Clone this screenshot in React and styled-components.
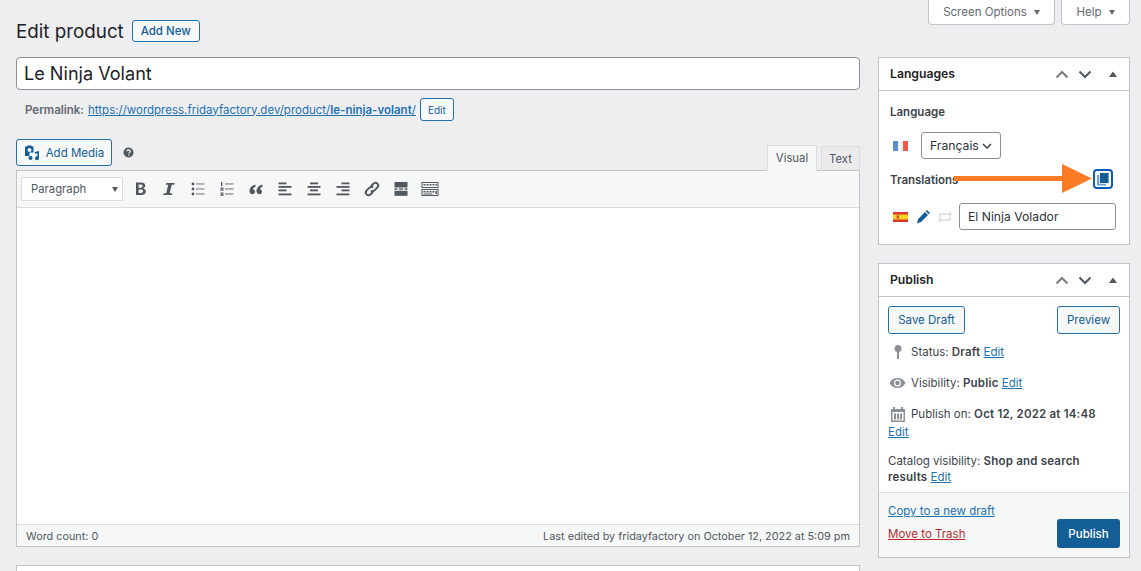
import React from "react";
import styled, { createGlobalStyle } from "styled-components";

const Global = createGlobalStyle`
  html, body { margin: 0; padding: 0; background: #eeeef0; height: 100%; overflow: hidden; }
  body { font-family: Inter, "Liberation Sans", sans-serif; font-size: 11.5px; color: #3c434a; }
  * { box-sizing: border-box; }
`;

const Page = styled.div`
  display: grid;
  grid-template-columns: 844px 252px;
  column-gap: 18px;
  padding-left: 16px;
  width: 1141px;
  height: 571px;
  overflow: hidden;
`;
const Left = styled.div`
  display: flex;
  flex-direction: column;
  padding-top: 20px;
`;
const Right = styled.div`
  display: flex;
  flex-direction: column;
`;
const HeadingRow = styled.div`
  display: flex;
  align-items: center;
  gap: 8px;
  height: 22px;
`;
const Title = styled.h1`
  margin: 0;
  padding-top: 1px;
  font-size: 18.8px;
  font-weight: 400;
  color: #1d2327;
  line-height: 22px;
`;
const OutlineButton = styled.a`
  display: inline-flex;
  align-items: center;
  justify-content: center;
  flex: none;
  border: 1px solid #2271b1;
  border-radius: 3px;
  background: #f6f7f7;
  color: #135e96;
  font-size: ${p => p.$size || 11.5}px;
  font-weight: ${p => p.$weight || 400};
  width: ${p => p.$w}px;
  height: ${p => p.$h}px;
  gap: ${p => p.$gap || 0}px;
  margin-left: ${p => p.$ml || 0}px;
`;
const TitleInput = styled.div`
  margin-top: 15px;
  height: 33px;
  background: #fff;
  border: 1px solid #8c8f94;
  border-radius: 4px;
  padding-left: 7px;
  font-size: 18.1px;
  line-height: 31.5px;
  color: #1d2327;
`;
const PermalinkRow = styled.div`
  display: flex;
  align-items: center;
  height: 23px;
  margin-top: 8px;
  padding-left: 9px;
  color: #646970;
  font-size: 11.5px;
`;
const PermaLabel = styled.b`
  font-weight: 600;
  margin-right: 4px;
`;
const Link = styled.a`
  color: ${p => p.$red ? "#b32d2e" : "#2271b1"};
  text-decoration: underline;
  font-weight: ${p => p.$bold ? 600 : 400};
`;
const EditorTop = styled.div`
  display: flex;
  align-items: flex-end;
  justify-content: space-between;
  margin-top: 18px;
  height: 32px;
  position: relative;
  z-index: 1;
`;
const MediaGroup = styled.div`
  display: flex;
  align-items: center;
  gap: 11px;
  height: 27px;
  align-self: flex-start;
`;
const HelpDot = styled.svg`
  display: block;
`;
const Tabs = styled.div`
  display: flex;
  align-items: flex-end;
  gap: 4px;
`;
const Tab = styled.div`
  display: flex;
  align-items: center;
  justify-content: center;
  width: ${p => p.$w}px;
  height: ${p => p.$active ? 26 : 25}px;
  border: 1px solid #dcdcde;
  border-bottom: ${p => p.$active ? "1px solid #f6f7f7" : "1px solid #c3c4c7"};
  background: ${p => p.$active ? "#f6f7f7" : "#ebebec"};
  color: #50575e;
  font-size: 11.3px;
`;
const Editor = styled.div`
  margin-top: -1px;
  height: 377px;
  display: flex;
  flex-direction: column;
  border: 1px solid #c3c4c7;
  background: #fff;
`;
const Toolbar = styled.div`
  display: flex;
  align-items: center;
  height: 37px;
  padding-left: 4px;
  background: #f6f7f7;
  border-bottom: 1px solid #dcdcde;
  flex: none;
`;
const FormatSelect = styled.div`
  display: flex;
  align-items: center;
  justify-content: space-between;
  width: 102px;
  height: 24px;
  padding: 0 4px 0 9px;
  background: #fff;
  border: 1px solid #dcdcde;
  color: #50575e;
  font-size: 11.3px;
  margin-right: 2px;
`;
const Caret = styled.i`
  width: 0;
  height: 0;
  border-left: 3.5px solid transparent;
  border-right: 3.5px solid transparent;
  border-top: 5px solid ${p => p.$color || "#50575e"};
`;
const ToolIcon = styled.span`
  width: 29px;
  height: 20px;
  display: flex;
  align-items: center;
  justify-content: center;
  color: #50575e;
`;
const EditBody = styled.div`
  flex: 1;
`;
const StatusBar = styled.div`
  display: flex;
  justify-content: space-between;
  align-items: center;
  height: 22px;
  flex: none;
  padding: 0 9px;
  background: #f6f7f7;
  border-top: 1px solid #dcdcde;
  font-size: 10.85px;
  color: #50575e;
`;
const NextBox = styled.div`
  margin-top: 18px;
  height: 30px;
  background: #fff;
  border: 1px solid #c3c4c7;
`;
const MetaTabs = styled.div`
  display: flex;
  justify-content: flex-end;
  gap: 6px;
  height: 25px;
  margin-bottom: 32px;
`;
const MetaTab = styled.div`
  display: flex;
  align-items: center;
  justify-content: center;
  gap: 7px;
  width: ${p => p.$w}px;
  height: 25px;
  background: #fff;
  border: 1px solid #c3c4c7;
  border-top: 0;
  border-radius: 0 0 4px 4px;
  color: #646970;
  font-size: 11.5px;
`;
const Box = styled.section`
  background: #fff;
  border: 1px solid #c3c4c7;
  margin-bottom: ${p => p.$mb || 0}px;
  position: relative;
`;
const BoxHead = styled.header`
  display: flex;
  align-items: center;
  height: 33px;
  padding: 0 9px 0 11px;
  border-bottom: 1px solid #c3c4c7;
`;
const BoxTitle = styled.h2`
  margin: 0;
  padding-bottom: 2px;
  flex: 1;
  font-size: 12.2px;
  font-weight: 600;
  color: #1d2327;
`;
const Handles = styled.div`
  display: flex;
  align-items: center;
  gap: 9px;
  svg { display: block; }
`;
const TriangleHandle = styled.svg`
  margin-left: 5px;
`;
const LangBody = styled.div`
  height: 153px;
  padding: 14px 11px 0 11px;
`;
const Label = styled.div`
  font-weight: 600;
  font-size: 11.5px;
  line-height: 15px;
  color: #3c434a;
`;
const LangRow = styled.div`
  display: flex;
  align-items: center;
  margin-top: ${p => p.$mt}px;
  padding-left: 3px;
  height: 27px;
`;
const SelectBox = styled.div`
  display: flex;
  align-items: center;
  justify-content: space-between;
  width: 80px;
  height: 27px;
  padding: 0 8px;
  margin-left: 13px;
  border: 1px solid #8c8f94;
  border-radius: 3px;
  color: #2c3338;
  font-size: 12.2px;
`;
const TransHead = styled.div`
  display: flex;
  align-items: center;
  justify-content: space-between;
  margin-top: 10px;
  height: 20px;
`;
const TransLabel = styled(Label)`
  padding-top: 2px;
`;
const CopyButton = styled.div`
  display: flex;
  align-items: center;
  justify-content: center;
  width: 20px;
  height: 20px;
  margin-right: 5px;
  border: 2px solid #0a5cb8;
  border-radius: 4px;
`;
const Arrow = styled.svg`
  position: absolute;
  left: 75px;
  top: 105px;
`;
const TransInput = styled.div`
  flex: 1;
  height: 27px;
  border: 1px solid #8c8f94;
  border-radius: 3px;
  padding-left: 8px;
  margin-right: 2px;
  line-height: 25px;
  font-size: 12.2px;
  color: #2c3338;
`;
const FlagBox = styled.svg`
  flex: none;
  display: block;
`;
const TransIcons = styled.div`
  display: flex;
  align-items: center;
  gap: 7px;
  margin: 0 7px 0 8px;
`;
const PublishActions = styled.div`
  display: flex;
  justify-content: space-between;
  padding: 9px 9px 0 9px;
`;
const Misc = styled.div`
  padding: 0 9px;
  height: 148px;
  font-size: 11.5px;
`;
const MiscRow = styled.div`
  display: flex;
  align-items: center;
  height: 16px;
  margin-top: ${p => p.$mt}px;
  gap: 4px;
`;
const MiscText = styled.span`
  white-space: pre;
`;
const MiscIcon = styled.span`
  width: 19px;
  display: flex;
  justify-content: center;
  flex: none;
`;
const B = styled.b`
  font-weight: 600;
  letter-spacing: 0.2px;
`;
const Foot = styled.div`
  height: 65px;
  background: #f6f7f7;
  border-top: 1px solid #dcdcde;
  display: flex;
  justify-content: space-between;
  padding: 10px 9px 0 9px;
  font-size: 11.5px;
`;
const FootLinks = styled.div`
  display: flex;
  flex-direction: column;
  gap: 7px;
  line-height: 16px;
`;
const Primary = styled.div`
  display: flex;
  align-items: center;
  justify-content: center;
  width: 63px;
  height: 29px;
  margin-top: 16px;
  background: #135e96;
  border-radius: 3px;
  color: #fff;
  font-weight: 500;
  font-size: 11.5px;
`;
const IconSvg = styled.svg`
  display: block;
`;

const Ico = ({ w = 20, h = 20, children }) => (
  <IconSvg width={w} height={h} viewBox={`0 0 ${w} ${h}`} fill="currentColor">{children}</IconSvg>
);

const Lines = ({ rows }) => (
  <Ico>
    {rows.map(([x, y, w], i) => <rect key={i} x={x} y={y} width={w} height="1.8" />)}
  </Ico>
);

const ICONS = [
  <Ico key="b"><path d="M6 3.500h5.200c2.500 0 4 1.100 4 3.100 0 1.400-.8 2.400-2 2.800 1.600.3 2.600 1.500 2.600 3.100 0 2.200-1.700 3.500-4.300 3.500H6zm2.600 2.100v3.100h2.100c1.200 0 1.900-.6 1.900-1.600s-.7-1.500-1.900-1.500zm0 5v3.300h2.400c1.400 0 2.100-.6 2.100-1.700s-.8-1.600-2.200-1.600z" /></Ico>,
  <Ico key="i"><path d="M7.500 4h8.200l-.4 1.800h-2.600l-2 8.400h2.600l-.4 1.800H4.200l.4-1.800h2.600l2-8.400H6.600z" /></Ico>,
  <Ico key="ul">
    <circle cx="5" cy="5" r="1.400" /><circle cx="5" cy="10" r="1.400" /><circle cx="5" cy="15" r="1.400" />
    <rect x="8" y="4.400" width="8.500" height="1.100" opacity=".75" /><rect x="8" y="9.400" width="8.500" height="1.100" opacity=".75" /><rect x="8" y="14.400" width="8.500" height="1.100" opacity=".75" />
  </Ico>,
  <Ico key="ol">
    <rect x="4" y="3" width="1.400" height="4" /><rect x="3.500" y="8.400" width="3" height="3.400" opacity=".8" /><rect x="3.500" y="13.400" width="3" height="3.600" opacity=".8" />
    <rect x="8" y="4.400" width="8.500" height="1.100" opacity=".75" /><rect x="8" y="9.400" width="8.500" height="1.100" opacity=".75" /><rect x="8" y="14.400" width="8.500" height="1.100" opacity=".75" />
  </Ico>,
  <Ico key="q"><path d="M9.300 5.500C6.300 6.400 3.500 8.600 3.500 12c0 2 1.300 3.200 2.900 3.200 1.500 0 2.600-1.100 2.600-2.500 0-1.300-.9-2.300-2.200-2.400.3-1.200 1.400-2.200 2.900-2.900zm7 0c-3 .9-5.800 3.100-5.800 6.500 0 2 1.300 3.200 2.900 3.200 1.500 0 2.600-1.100 2.600-2.500 0-1.300-.9-2.300-2.200-2.400.3-1.200 1.400-2.200 2.900-2.900z" /></Ico>,
  <Lines key="al" rows={[[3.5, 3.5, 8], [3.5, 7, 13], [3.5, 10.5, 8], [3.5, 14.5, 13]]} />,
  <Lines key="ac" rows={[[6, 3.5, 8], [3.5, 7, 13], [6, 10.5, 8], [3.5, 14.5, 13]]} />,
  <Lines key="ar" rows={[[8.5, 3.5, 8], [3.5, 7, 13], [8.5, 10.5, 8], [3.5, 14.5, 13]]} />,
  <Ico key="l"><g fill="none" stroke="currentColor" strokeWidth="2"><path d="M9 7.200l2.100-2.200c1.400-1.400 3.200-1.500 4.300-.4s1 2.900-.4 4.300l-2 2c-1.300 1.300-3 1.400-4 .5" /><path d="M11 12.800L8.900 15c-1.400 1.400-3.200 1.500-4.300.4s-1-2.900.4-4.300l2-2c1.300-1.300 3-1.400 4-.5" /></g></Ico>,
  <Ico key="hr"><rect x="3.500" y="3" width="13" height="5.500" /><rect x="3.500" y="9.400" width="3" height="1.400" /><rect x="8" y="9.400" width="4" height="1.400" /><rect x="13.500" y="9.400" width="3" height="1.400" /><rect x="3.500" y="11.800" width="13" height="5" /></Ico>,
  <Ico key="k">
    <path fillRule="evenodd" d="M1.500 3h17v6h-17zM2.500 4v4h15V4zM1.500 10h17v7h-17zM2.500 11v5h15v-5z" />
    <path d="M3.500 5h2v1.600h-2zM6.500 5h2v1.600h-2zM9.500 5h2v1.600h-2zM12.500 5h2v1.600h-2zM15.500 5h1.500v1.600h-1.500zM3.500 12h2v1.600h-2zM6.500 12h2v1.600h-2zM9.500 12h2v1.600h-2zM12.500 12h2v1.600h-2zM15.500 12h1.500v3h-1.500zM3.500 14.400h9v1h-9z" />
  </Ico>,
];

const HandleSet = () => (
  <Handles>
    <svg width="14" height="9" viewBox="0 0 14 9" fill="none" stroke="#787c82" strokeWidth="2"><path d="M1.500 7.500L7 2l5.500 5.500" /></svg>
    <svg width="14" height="9" viewBox="0 0 14 9" fill="none" stroke="#50575e" strokeWidth="2"><path d="M1.500 1.500L7 7l5.500-5.500" /></svg>
    <TriangleHandle width="14" height="9" viewBox="0 0 14 9" fill="#50575e"><path d="M7 1.500L11 7H3z" /></TriangleHandle>
  </Handles>
);

const FlagFR = () => (
  <FlagBox width="15" height="10" viewBox="0 0 15 10">
    <rect width="5" height="10" fill="#5b8fc9" /><rect x="5" width="5" height="10" fill="#eef1f7" /><rect x="10" width="5" height="10" fill="#ee5a4a" />
  </FlagBox>
);
const FlagES = () => (
  <FlagBox width="15" height="10" viewBox="0 0 15 10">
    <rect width="15" height="10" fill="#e0352f" /><rect y="2.500" width="15" height="5" fill="#f8d21f" /><rect x="3.500" y="3.200" width="2.500" height="3.400" fill="#d0562f" />
  </FlagBox>
);

export default function App() {
  return (
    <Page>
      <Global />
      <Left>
        <HeadingRow>
          <Title>Edit product</Title>
          <OutlineButton $w={68} $h={22} $weight={500}>Add New</OutlineButton>
        </HeadingRow>
        <TitleInput>Le Ninja Volant</TitleInput>
        <PermalinkRow>
          <PermaLabel>Permalink:</PermaLabel>
          <Link>https://wordpress.fridayfactory.dev/product/<Link $bold as="span">le-ninja-volant</Link>/</Link>
          <OutlineButton $w={34} $h={23} $size={10} $ml={4}>Edit</OutlineButton>
        </PermalinkRow>
        <EditorTop>
          <MediaGroup>
            <OutlineButton $w={96} $h={27} $gap={6}>
              <svg width="16" height="16" viewBox="0 0 16 16" fill="#135e96">
                <path fillRule="evenodd" d="M1 1.500h2l.6-1h3.800l.6 1h1.500v6H5.500v3.500H1zM5.500 3a2 2 0 100 4 2 2 0 000-4z" />
                <path d="M15 6v7.200a2 2 0 11-1.600-1.900V8.200l-2.400.6V9h-.1V7z" />
                <circle cx="6.500" cy="13" r="2" />
              </svg>
              Add Media
            </OutlineButton>
            <HelpDot width="11" height="11" viewBox="0 0 11 11">
              <circle cx="5.500" cy="5.500" r="5" fill="#50575e" />
              <path d="M3.800 4.300c.1-1 .8-1.500 1.800-1.500s1.700.6 1.700 1.400c0 1.200-1.300 1.200-1.300 2.300" fill="none" stroke="#fff" strokeWidth="1.200" />
              <rect x="5.300" y="7.500" width="1.200" height="1.200" fill="#fff" />
            </HelpDot>
          </MediaGroup>
          <Tabs>
            <Tab $w={50} $active>Visual</Tab>
            <Tab $w={39}>Text</Tab>
          </Tabs>
        </EditorTop>
        <Editor>
          <Toolbar>
            <FormatSelect>Paragraph<Caret /></FormatSelect>
            {ICONS.map((ic, i) => <ToolIcon key={i}>{ic}</ToolIcon>)}
          </Toolbar>
          <EditBody />
          <StatusBar>
            <span>Word count: 0</span>
            <span>Last edited by fridayfactory on October 12, 2022 at 5:09 pm</span>
          </StatusBar>
        </Editor>
        <NextBox />
      </Left>
      <Right>
        <MetaTabs>
          <MetaTab $w={127}>Screen Options <Caret $color="#646970" /></MetaTab>
          <MetaTab $w={69}>Help <Caret $color="#646970" /></MetaTab>
        </MetaTabs>
        <Box $mb={18}>
          <BoxHead>
            <BoxTitle>Languages</BoxTitle>
            <HandleSet />
          </BoxHead>
          <LangBody>
            <Label>Language</Label>
            <LangRow $mt={12}>
              <FlagFR />
              <SelectBox>Français
                <svg width="10" height="6" viewBox="0 0 10 6" fill="none" stroke="#2c3338" strokeWidth="1.300"><path d="M1 1l4 4 4-4" /></svg>
              </SelectBox>
            </LangRow>
            <TransHead>
              <TransLabel>Translations</TransLabel>
              <CopyButton>
                <svg width="14" height="14" viewBox="0 0 14 14">
                  <rect x="1" y="3" width="9" height="10.500" fill="#6f9fcb" />
                  <rect x="3.500" y="0.500" width="9.500" height="11" fill="#135e96" stroke="#fff" strokeWidth="0.800" />
                </svg>
              </CopyButton>
            </TransHead>
            <LangRow $mt={14}>
              <FlagES />
              <TransIcons>
                <svg width="15" height="15" viewBox="0 0 15 15" fill="#135e96">
                  <path d="M11 1l3 3-1.200 1.200-3-3zM9 3l3 3-7 7-4 1.500L2 10.300z" />
                </svg>
                <svg width="14" height="12" viewBox="0 0 14 12" fill="none" stroke="#dcdcde" strokeWidth="1.700">
                  <path d="M2 6V3h9M11 1l2 2-2 2M12 6v3H3M3 7L1 9l2 2" />
                </svg>
              </TransIcons>
              <TransInput>El Ninja Volador</TransInput>
            </LangRow>
          </LangBody>
          <Arrow width="146" height="32" viewBox="0 0 146 32">
            <path d="M0 13h108V1l30 14.500L108 30V18H0z" fill="#fe7a24" />
          </Arrow>
        </Box>
        <Box>
          <BoxHead>
            <BoxTitle>Publish</BoxTitle>
            <HandleSet />
          </BoxHead>
          <PublishActions>
            <OutlineButton $w={77} $h={28}>Save Draft</OutlineButton>
            <OutlineButton $w={63} $h={28}>Preview</OutlineButton>
          </PublishActions>
          <Misc>
            <MiscRow $mt={10}>
              <MiscIcon>
                <svg width="10" height="16" viewBox="0 0 10 16" fill="#8c8f94"><circle cx="5" cy="4.500" r="3.500" /><rect x="4" y="6" width="2" height="9" /></svg>
              </MiscIcon>
              <MiscText>Status: <B>Draft</B> <Link>Edit</Link></MiscText>
            </MiscRow>
            <MiscRow $mt={15}>
              <MiscIcon>
                <svg width="17" height="12" viewBox="0 0 17 12"><path d="M.5 6C2.500 2.800 5 1 8.500 1S14.500 2.800 16.500 6c-2 3.200-4.500 5-8 5S2.500 9.200.5 6z" fill="#8c8f94" /><circle cx="8.500" cy="6" r="3.500" fill="#fff" /><circle cx="8.500" cy="6" r="2.300" fill="#8c8f94" /></svg>
              </MiscIcon>
              <MiscText>Visibility: <B>Public</B> <Link>Edit</Link></MiscText>
            </MiscRow>
            <MiscRow $mt={15}>
              <MiscIcon>
                <svg width="16" height="15" viewBox="0 0 16 15" fill="#8c8f94"><path fillRule="evenodd" d="M1 2h2V0h2v2h6V0h2v2h2v13H1zM2.500 5v8.500h11V5z" /><rect x="4" y="6.500" width="2" height="6" /><rect x="7" y="6.500" width="2" height="6" /><rect x="10" y="6.500" width="2" height="6" /></svg>
              </MiscIcon>
              <MiscText>Publish on: <B>Oct 12, 2022 at 14:48</B></MiscText>
            </MiscRow>
            <MiscRow $mt={2}><Link>Edit</Link></MiscRow>
            <MiscRow $mt={13}><MiscText>Catalog visibility: <B>Shop and search</B></MiscText></MiscRow>
            <MiscRow $mt={0}><MiscText><B>results</B> <Link>Edit</Link></MiscText></MiscRow>
          </Misc>
          <Foot>
            <FootLinks>
              <Link>Copy to a new draft</Link>
              <Link $red>Move to Trash</Link>
            </FootLinks>
            <Primary>Publish</Primary>
          </Foot>
        </Box>
      </Right>
    </Page>
  );
}
